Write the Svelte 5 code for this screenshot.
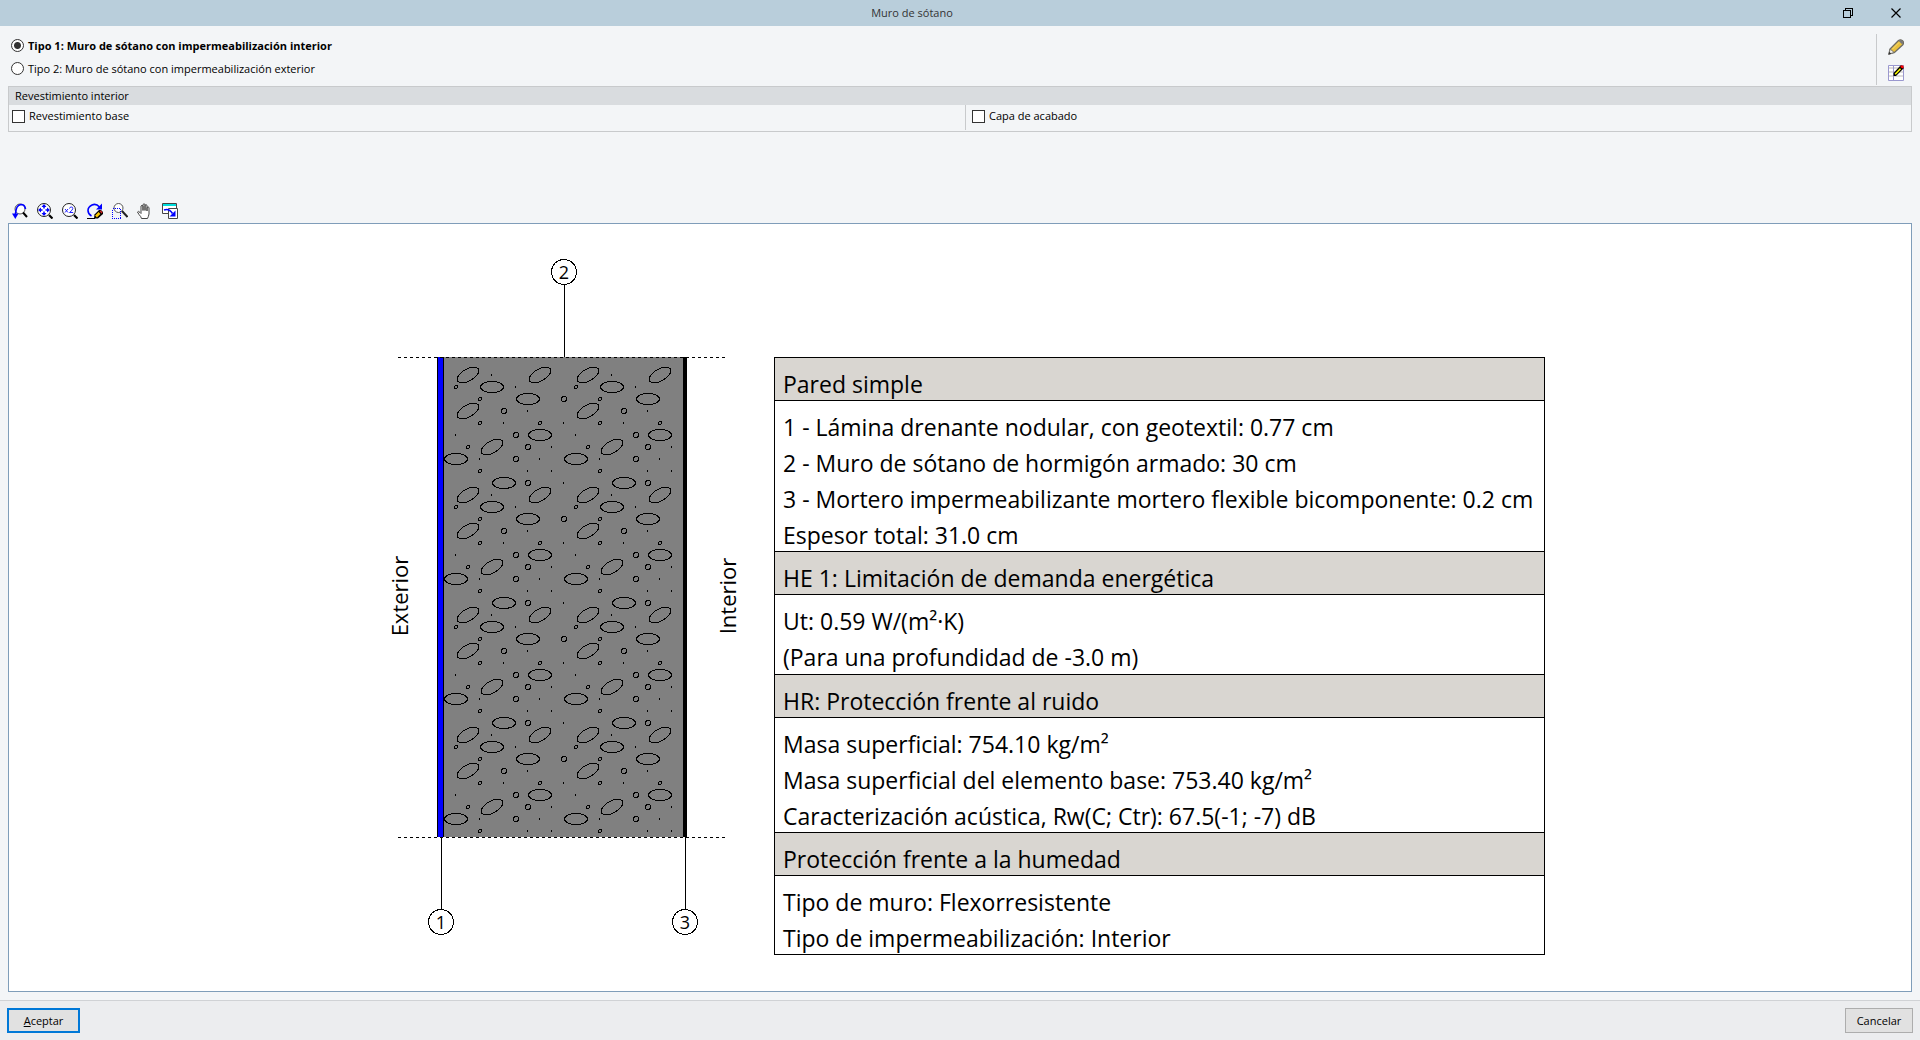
<script>
  let tipo = $state(1);
  let base = $state(false);
  let acabado = $state(false);

  const tipos = [
    { id: 1, label: 'Tipo 1: Muro de sótano con impermeabilización interior' },
    { id: 2, label: 'Tipo 2: Muro de sótano con impermeabilización exterior' }
  ];

  const secciones = [
    {
      titulo: 'Pared simple',
      lineas: [
        '1 - Lámina drenante nodular, con geotextil: 0.77 cm',
        '2 - Muro de sótano de hormigón armado: 30 cm',
        '3 - Mortero impermeabilizante mortero flexible bicomponente: 0.2 cm',
        'Espesor total: 31.0 cm'
      ]
    },
    {
      titulo: 'HE 1: Limitación de demanda energética',
      lineas: ['Ut: 0.59 W/(m²·K)', '(Para una profundidad de -3.0 m)']
    },
    {
      titulo: 'HR: Protección frente al ruido',
      lineas: [
        'Masa superficial: 754.10 kg/m²',
        'Masa superficial del elemento base: 753.40 kg/m²',
        'Caracterización acústica, Rw(C; Ctr): 67.5(-1; -7) dB'
      ]
    },
    {
      titulo: 'Protección frente a la humedad',
      lineas: ['Tipo de muro: Flexorresistente', 'Tipo de impermeabilización: Interior']
    }
  ];

  // concrete hatch, one 120 x 120 tile
  const inclinadas = [[24, 18], [96, 18], [24, 54], [48, 90]];
  const planas = [[48, 30], [84, 42], [96, 78], [12, 102]];
  const gravas = [[120, 42], [60, 54], [72, 78], [84, 90], [72, 102]];
  const arenas = [[12, 30], [36, 42], [36, 66], [96, 66], [24, 90], [36, 114]];
  const puntos = [
    [47, 18], [71, 30], [83, 54], [59, 66], [119, 66], [11, 78],
    [107, 90], [35, 102], [95, 102], [83, 114], [107, 114]
  ];

  const filas = [0, 1, 2, 3];
  const columnas = [0, 1];

  const llamadas = [
    { n: 1, x: 441, y: 922, y1: 837, y2: 910 },
    { n: 2, x: 564, y: 272, y1: 284, y2: 357 },
    { n: 3, x: 685, y: 922, y1: 837, y2: 910 }
  ];
</script>

<div class="dialog">
  <header class="titlebar">
    <h1>Muro de sótano</h1>
    <button class="win-btn" aria-label="Restaurar">
      <svg width="10" height="10" viewBox="0 0 10 10" shape-rendering="crispEdges">
        <path d="M0.5 2.5h7v7h-7zM2.5 2.5v-2h7v7h-2" fill="none" stroke="#000" />
      </svg>
    </button>
    <button class="win-btn" aria-label="Cerrar">
      <svg width="10" height="10" viewBox="0 0 10 10">
        <path d="M0.5 0.5l9 9M9.5 0.5l-9 9" stroke="#000" stroke-width="1.2" />
      </svg>
    </button>
  </header>

  <div class="options">
    <div class="types">
      {#each tipos as t}
        <label class:selected={tipo === t.id}>
          <input type="radio" name="tipo" value={t.id} bind:group={tipo} />
          {t.label}
        </label>
      {/each}
    </div>
    <div class="side-tools">
      <button aria-label="Editar">
        <svg width="16" height="16" viewBox="0 0 16 16">
          <path d="M1 15l1-5 8.500-8.500q2-1.500 4 0.300t0.300 4L6.500 13.500z" fill="#e9c03c" stroke="#6b6a66" stroke-width="1.300" />
          <path d="M1 15l1.200-5 4 3.500z" fill="#f6f4ee" stroke="#77756f" />
          <path d="M10.500 1.800l3.800 3.800 1-2.200-2.200-2.400z" fill="#77787c" />
          <path d="M0.500 15.500l0.800-2.800 2 2z" fill="#333" />
          <path d="M4.500 10l6.500-6.500" stroke="#f4d976" />
        </svg>
      </button>
      <button aria-label="Editar tabla">
        <svg width="16" height="16" viewBox="0 0 16 16">
          <path d="M0.500 0.500h15v15h-15z" fill="#fff" stroke="#9a98cf" />
          <path d="M1 2h14v2H1zM1 6h14v2H1zM1 10h14v2H1z" fill="#dedcdc" />
          <path d="M5.500 1v14" stroke="#9a98cf" />
          <path d="M5.500 11v-3l7-7.500h1.500l1.500 1.500v1.500l-7.500 7.500z" fill="#000" />
          <path d="M7.200 9.300l5.300-5.600" stroke="#ff0" stroke-width="1.600" />
          <path d="M12.500 0.500h3v2.800h-1.600l-1.400-1.300z" fill="#f00" />
        </svg>
      </button>
    </div>
  </div>

  <section class="group">
    <h2>Revestimiento interior</h2>
    <div class="group-body">
      <div class="cell"><label><input type="checkbox" bind:checked={base} />Revestimiento base</label></div>
      <div class="cell"><label><input type="checkbox" bind:checked={acabado} />Capa de acabado</label></div>
    </div>
  </section>

  <div class="toolbar">
    <button aria-label="Vista anterior">
      <svg width="16" height="16" viewBox="0 0 16 16">
        <circle cx="8" cy="6" r="5" fill="#fff" stroke="#555" />
        <path d="M11 9.500l4 4.500" stroke="#000" stroke-width="2" />
        <path d="M13.500 6q-0.500-4.500-4.500-4.500-5 0.300-5.500 9.500" fill="none" stroke="#00f" stroke-width="1.600" />
        <path d="M0 10.500h6.500l-3.200 5.500z" fill="#00f" />
      </svg>
    </button>
    <button aria-label="Vista completa">
      <svg width="16" height="16" viewBox="0 0 16 16">
        <circle cx="7" cy="7" r="6.500" fill="#fff" stroke="#222" />
        <path d="M12 12l3.500 3.500" stroke="#000" stroke-width="2.200" />
        <path d="M7 3v2.500M7 8.500v2.500M3 7h2.500M8.500 7h2.500" stroke="#00f" stroke-width="1.500" />
        <path d="M7 1l2.500 3h-5zM7 13l2.500-3h-5zM1 7l3-2.500v5zM13 7l-3-2.500v5z" fill="#00f" />
      </svg>
    </button>
    <button aria-label="Zoom x2">
      <svg width="16" height="16" viewBox="0 0 16 16">
        <circle cx="7" cy="7" r="6.500" fill="#fff" stroke="#222" />
        <path d="M12 12l3.500 3.500" stroke="#000" stroke-width="2.200" />
        <path d="M3 6l3 3.500M6 6l-3 3.500M7.500 5.500q0.300-1.500 1.800-1.500t1.500 1.500-3.300 4h3.700" fill="none" stroke="#22f" />
      </svg>
    </button>
    <button aria-label="Redibujar">
      <svg width="16" height="16" viewBox="0 0 16 16">
        <path d="M4.500 13q-3.500-2-3.500-5.500t4-5.500 7.500 2" fill="none" stroke="#00f" stroke-width="1.600" />
        <path d="M15 0.500v6h-6z" fill="#00f" />
        <path d="M0 15.500h8" stroke="#000" />
        <path d="M7 15.500l0.500-4 4.500-4.500h2l2 2v2l-5 4.500z" fill="#000" />
        <path d="M9 13.500l3.500-3.500" stroke="#fc0" stroke-width="2.500" />
        <path d="M12.500 8l1.500-0.500 1.500 2-1 1z" fill="#d22" />
      </svg>
    </button>
    <button aria-label="Ventana de zoom">
      <svg width="16" height="16" viewBox="0 0 16 16">
        <circle cx="6.500" cy="5" r="4.500" fill="#fff" stroke="#555" />
        <path d="M10 8l5.500 6" stroke="#222" stroke-width="2" />
        <path d="M0.500 5.500h8v10h-8z" fill="none" stroke="#00f" stroke-dasharray="1 1" shape-rendering="crispEdges" />
      </svg>
    </button>
    <button aria-label="Mover">
      <svg width="16" height="16" viewBox="0 0 16 16">
        <path d="M4.500 15.500q-0.500-2-2.500-4l-1.500-2.500q0.800-1.500 2.500 0.500l1 1V3q1.200-1.500 2 0V7.500V1.500q1-1.500 2 0V7.500V2.300q1-1.300 2 0V8V4.500q1.200-1.200 2 0V11q-0.500 2.500-1.500 4.500z" fill="#fff" stroke="#444" />
      </svg>
    </button>
    <button aria-label="Ajustar a ventana">
      <svg width="16" height="16" viewBox="0 0 16 16">
        <path d="M0.500 0.500h14v10h-14z" fill="#fff" stroke="#444" />
        <path d="M1 1h13v2H1z" fill="#0dd" />
        <path d="M6.500 5.500h9v10h-9z" fill="#fff" stroke="#444" />
        <path d="M2 7q5-2 8.500 3.500" fill="none" stroke="#00f" stroke-width="1.600" />
        <path d="M13.500 7.500v6h-6z" fill="#00f" />
      </svg>
    </button>
  </div>

  <main class="canvas">
    <div class="drawing">
      <svg class="wall" width="399" height="696" viewBox="375 259 399 696">
        <rect x="443" y="357" width="240" height="480" fill="#808080" />
        <g class="hatch">
          {#each filas as f}
            {#each columnas as c}
              <g transform="translate({444 + c * 120} {357 + f * 120})">
                {#each inclinadas as [x, y]}
                  <ellipse cx={x} cy={y} rx="12" ry="6" transform="rotate(-30 {x} {y})" />
                {/each}
                {#each planas as [x, y]}
                  <ellipse cx={x} cy={y} rx="11.5" ry="5.5" />
                {/each}
                {#each gravas as [x, y]}
                  {#if x < 120 || c === 0}
                    <circle cx={x} cy={y} r="2.500" />
                  {/if}
                {/each}
                {#each arenas as [x, y]}
                  <circle cx={x} cy={y} r="1.500" />
                {/each}
                {#each puntos as [x, y]}
                  {#if x < 119 || c === 0}
                    <rect class="dot" {x} y={y - 1} width="1" height="2" />
                  {/if}
                {/each}
                {#if f < 3}
                  <ellipse cx="60" cy="126" rx="11.5" ry="5.5" />
                  <circle cx="84" cy="126" r="2.500" />
                  {#if c === 0}
                    <rect class="dot" x="119" y="125" width="1" height="2" />
                  {/if}
                {/if}
              </g>
            {/each}
          {/each}
        </g>
        <rect x="437" y="357" width="7" height="480" fill="#000" />
        <rect x="438" y="357" width="5" height="480" fill="#00f" />
        <rect x="683" y="357" width="4" height="480" fill="#000" />
        <path d="M398 357.500H725M398 837.500H725" stroke="#000" stroke-dasharray="3 3" />
        {#each llamadas as l}
          <line x1={l.x + 0.5} x2={l.x + 0.5} y1={l.y1} y2={l.y2} stroke="#000" />
          <circle cx={l.x} cy={l.y} r="12.5" fill="#fff" stroke="#000" />
          <text class="num" x={l.x} y={l.y + 7}>{l.n}</text>
        {/each}
        <text class="side" transform="translate(408 596) rotate(-90)">Exterior</text>
        <text class="side" transform="translate(736 596) rotate(-90)">Interior</text>
      </svg>

      <table>
        <tbody>
          {#each secciones as s}
            <tr><th scope="row">{s.titulo}</th></tr>
            <tr>
              <td>
                {#each s.lineas as linea}
                  <p>{linea}</p>
                {/each}
              </td>
            </tr>
          {/each}
        </tbody>
      </table>
    </div>
  </main>

  <footer>
    <button class="btn default"><span><u>A</u>ceptar</span></button>
    <button class="btn">Cancelar</button>
  </footer>
</div>

<style>
  :global(body) {
    margin: 0;
  }

  .dialog {
    display: flex;
    flex-direction: column;
    min-height: 100vh;
    background: #f3f5f7;
    color: #000;
    font-family: 'Open Sans', 'Noto Sans', sans-serif;
    font-size: 11px;
    line-height: 16px;
  }

  button {
    display: flex;
    align-items: center;
    justify-content: center;
    padding: 0;
    border: 0;
    background: none;
    font: inherit;
    color: inherit;
  }

  .titlebar {
    display: flex;
    height: 26px;
    background: #b9cedb;
  }

  h1 {
    flex: 1;
    margin: 0;
    font-size: 11px;
    font-weight: 400;
    line-height: 26px;
    text-align: center;
    color: #333;
  }

  .win-btn {
    width: 48px;
  }

  .options {
    display: flex;
    justify-content: space-between;
    height: 52px;
    padding: 8px 8px 0 11px;
  }

  .types label {
    display: flex;
    align-items: center;
    gap: 4px;
    height: 23px;
  }

  .types .selected {
    font-weight: 700;
  }

  input {
    appearance: none;
    box-sizing: border-box;
    width: 13px;
    height: 13px;
    margin: 0;
    border: 1px solid #333;
    background: #fff;
  }

  input[type='radio'] {
    border-radius: 50%;
  }

  input[type='radio']:checked {
    background: radial-gradient(circle, #333 3px, #fff 4px);
  }

  input[type='checkbox']:checked {
    box-shadow: inset 0 0 0 2px #fff;
    background: #333;
  }

  .side-tools {
    display: flex;
    flex-direction: column;
    align-items: flex-start;
    gap: 10px;
    box-sizing: border-box;
    width: 36px;
    height: 51px;
    padding: 5px 0 0 11px;
    border-left: 1px solid #c8cacc;
  }

  .group {
    margin: 0 8px;
    border: 1px solid #c8cacc;
  }

  h2 {
    margin: 0;
    padding: 1px 6px;
    background: #d9dcdf;
    font-size: 11px;
    font-weight: 400;
  }

  .group-body {
    display: grid;
    grid-template-columns: 1fr 1fr;
    column-gap: 10px;
    height: 26px;
  }

  .cell {
    padding: 3px 3px 0;
  }

  .cell + .cell {
    height: 22px;
    padding-left: 6px;
    border-left: 1px solid #c8cacc;
  }

  .cell label {
    display: flex;
    align-items: center;
    gap: 4px;
  }

  .toolbar {
    display: flex;
    margin: 67px 8px 0;
  }

  .toolbar button {
    justify-content: flex-start;
    width: 25px;
    height: 24px;
    padding-left: 4px;
  }

  .canvas {
    flex: 1;
    display: flex;
    align-items: center;
    justify-content: center;
    margin: 0 8px 8px;
    border: 1px solid #7f9db9;
    background: #fff;
  }

  .drawing {
    display: flex;
    align-items: flex-end;
    padding-bottom: 1px;
  }

  .wall {
    display: block;
    shape-rendering: crispEdges;
  }

  .hatch {
    fill: none;
    stroke: #000;
  }

  .hatch .dot {
    fill: #000;
    stroke: none;
  }

  .wall text {
    text-anchor: middle;
  }

  .num {
    font-size: 18px;
  }

  .side {
    font-size: 22px;
  }

  table {
    width: 771px;
    height: 598px;
    border-collapse: collapse;
    font-size: 23px;
    line-height: 32px;
    white-space: nowrap;
  }

  th,
  td {
    padding: 10px 8px 0;
    border: 1px solid #000;
    font-weight: 400;
    text-align: left;
  }

  th {
    background: #d9d6d1;
  }

  p {
    margin: 0;
  }

  p + p {
    margin-top: 4px;
  }

  footer {
    display: flex;
    justify-content: space-between;
    padding: 7px;
    border-top: 1px solid #d0d2d5;
    background: #ecedef;
  }

  .btn {
    min-width: 68px;
    height: 25px;
    border: 1px solid #adadad;
    background: #e1e1e1;
  }

  .default {
    min-width: 73px;
    border: 2px solid #0078d7;
  }
</style>
